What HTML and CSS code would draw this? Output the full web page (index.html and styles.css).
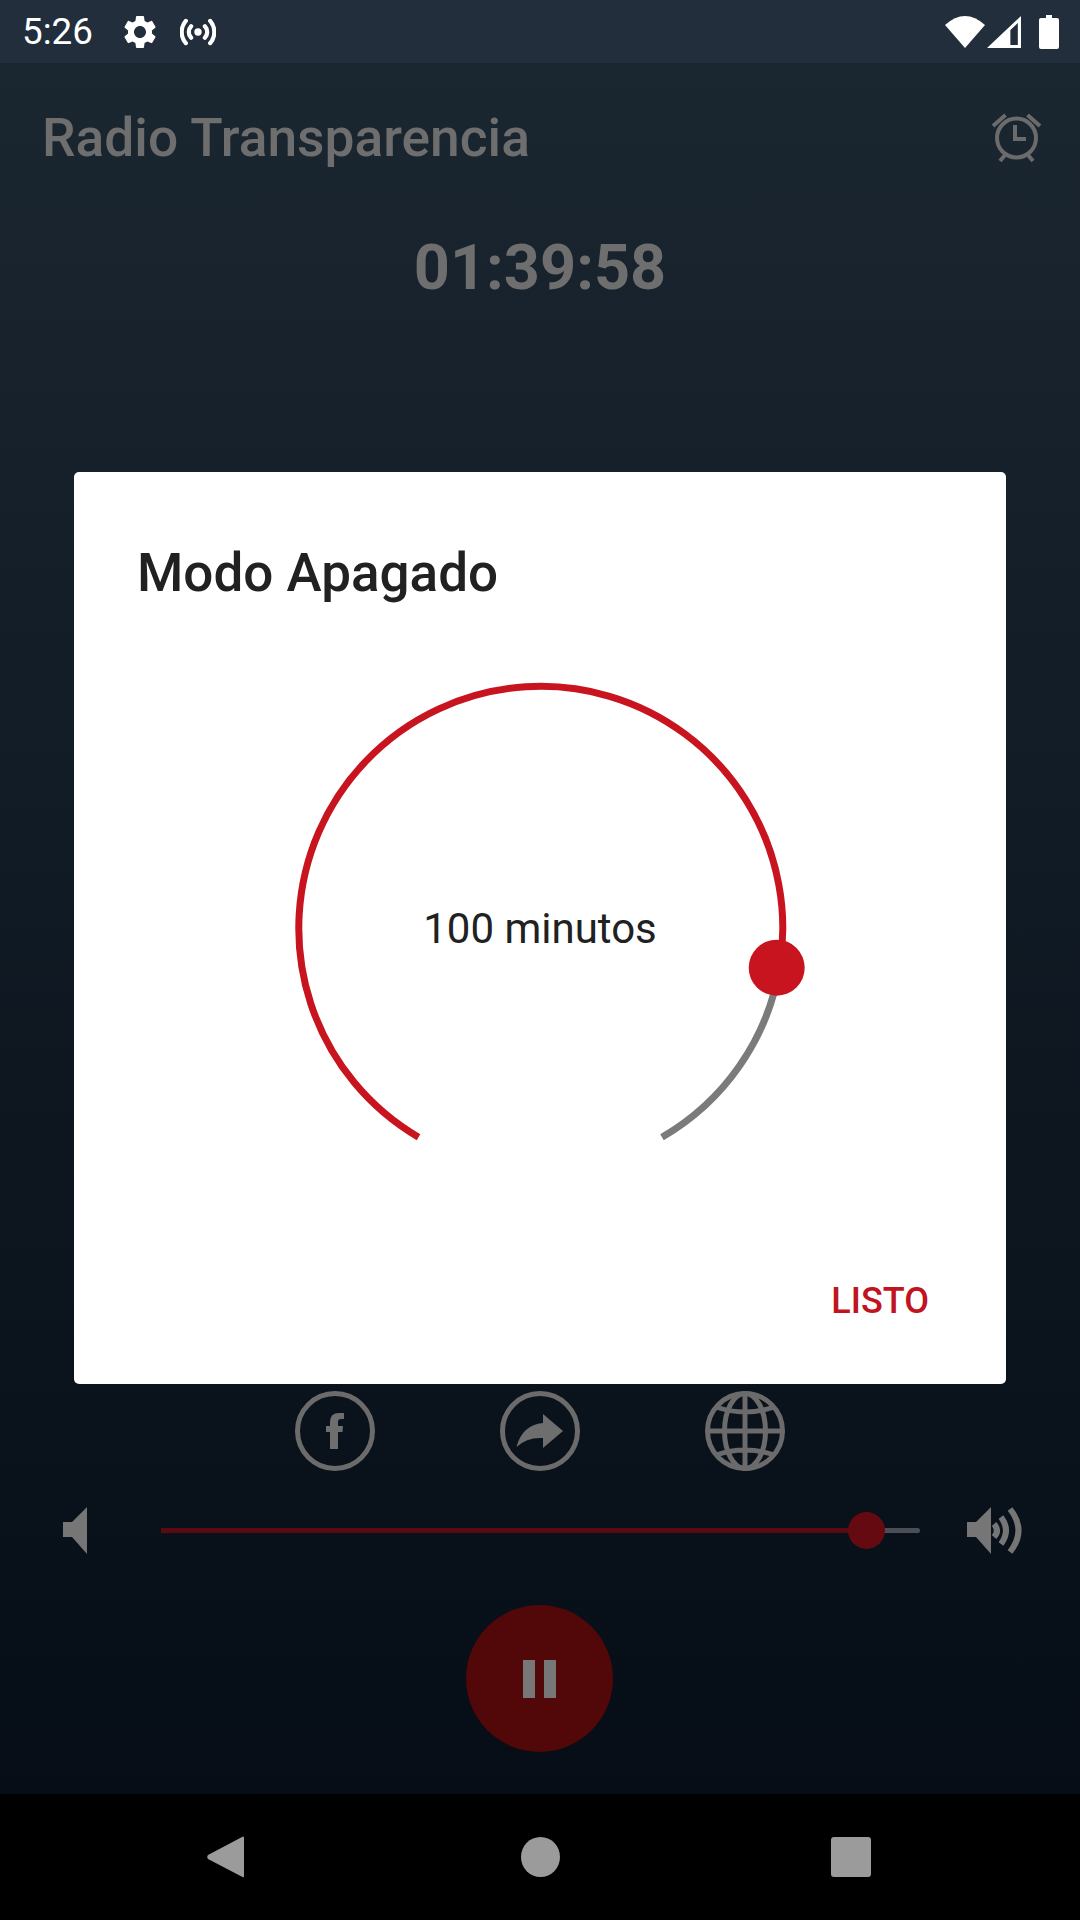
FILE: index.html
```html
<!DOCTYPE html>
<html lang="en">

<head>
    <meta charset="UTF-8">
    <meta name="viewport" content="width=device-width, initial-scale=1.0">
    <title>Radio Transparencia</title>
    <link rel="stylesheet" href="styles.css">
</head>

<body>
    <div class="screen">
        <!-- Status Bar -->
        <div class="status-bar">
            <span class="clock">5:26</span>
            <svg class="gear" viewBox="0 0 24 24"><path d="M19.14 12.94c.04-.3.06-.61.06-.94 0-.32-.02-.64-.07-.94l2.03-1.58c.18-.14.23-.41.12-.61l-1.92-3.32c-.12-.22-.37-.29-.59-.22l-2.39.96c-.5-.38-1.03-.7-1.62-.94l-.36-2.54c-.04-.24-.24-.41-.48-.41h-3.84c-.24 0-.43.17-.47.41l-.36 2.54c-.59.24-1.13.57-1.62.94l-2.39-.96c-.22-.08-.47 0-.59.22L2.74 8.87c-.12.21-.08.47.12.61l2.03 1.58c-.05.3-.09.63-.09.94s.02.64.07.94l-2.03 1.58c-.18.14-.23.41-.12.61l1.92 3.32c.12.22.37.29.59.22l2.39-.96c.5.38 1.03.7 1.62.94l.36 2.54c.05.24.24.41.48.41h3.84c.24 0 .44-.17.47-.41l.36-2.54c.59-.24 1.13-.56 1.62-.94l2.39.96c.22.08.47 0 .59-.22l1.92-3.32c.12-.22.07-.47-.12-.61l-2.01-1.58zM12 15.6c-1.98 0-3.6-1.62-3.6-3.6s1.62-3.6 3.6-3.6 3.6 1.62 3.6 3.6-1.62 3.6-3.6 3.6z"/></svg>
            <svg class="hotspot" viewBox="0 0 34 26">
                <circle cx="17" cy="13" r="3.5" class="solid"/>
                <path d="M10.5 7.5a8 8 0 0 0 0 11M23.5 7.5a8 8 0 0 1 0 11M5.5 2.5a16 16 0 0 0 0 21M28.5 2.5a16 16 0 0 1 0 21" class="line"/>
            </svg>
            <div class="status-right">
                <svg class="wifi" viewBox="0 0 38 33" preserveAspectRatio="none"><path d="M0 10Q19-8 38 10L19 33Z"/></svg>
                <svg class="signal" viewBox="0 0 32 32" preserveAspectRatio="none"><path fill-rule="evenodd" d="M32 0V32H0ZM29 7L22 14V29H29Z"/></svg>
                <svg class="battery" viewBox="0 0 20 34"><path d="M7 0H13V3H18Q20 3 20 5V32Q20 34 18 34H2Q0 34 0 32V5Q0 3 2 3H7Z"/></svg>
            </div>
        </div>

        <!-- Header -->
        <div class="header">
            <h1 class="station">Radio Transparencia</h1>
            <svg class="alarm" viewBox="0 0 50 50">
                <circle cx="24.5" cy="25" r="19.5"/>
                <path d="M23 12V26H34M1 13L13.5 2M48 13L35.500 2M8 48L13 42M41 48L36 42"/>
            </svg>
        </div>
        <div class="timer">01:39:58</div>

        <!-- Player Controls -->
        <div class="player">
            <div class="social">
                <svg class="social-icon" viewBox="0 0 80 80">
                    <circle cx="40" cy="40" r="37.500"/>
                    <path class="fill" d="M35 58V41H31V35H35V31Q35 22 44 22H49V28H46Q43 28 43 31V35H48L47.500 41H43V58Z"/>
                </svg>
                <svg class="social-icon" viewBox="0 0 80 80">
                    <circle cx="40" cy="40" r="37.500"/>
                    <path class="fill" d="M43 23L63 40L43 57V47Q27 46 16.500 56Q22 34 43 32Z"/>
                </svg>
                <svg class="social-icon" viewBox="0 0 80 80">
                    <circle cx="40" cy="40" r="37.500"/>
                    <ellipse cx="40" cy="40" rx="20.500" ry="37.500"/>
                    <path d="M40 2V78M2 40H78M11 16Q40 26 69 16M11 64Q40 54 69 64"/>
                </svg>
            </div>
            <div class="volume">
                <svg class="speaker-low" viewBox="0 0 24 47"><path d="M0 15H9L24 0V47L9 30H0Z"/></svg>
                <div class="slider">
                    <div class="slider-fill"></div>
                    <div class="slider-thumb"></div>
                </div>
                <svg class="speaker-high" viewBox="0 0 56 47">
                    <path class="fill" d="M0 15H9L24 0V47L9 30H0Z"/>
                    <path d="M27 17Q33 23.500 27 30M34 10Q44 23.500 34 37M43 2Q60 23.500 43 45"/>
                </svg>
            </div>
            <button class="play-btn"><span class="pause-bar"></span><span class="pause-bar"></span></button>
        </div>

        <!-- Navigation Bar -->
        <div class="nav-bar">
            <svg class="nav-back" viewBox="0 0 37 42"><path d="M36 .5Q37 0 37 2V40Q37 42 35.500 41L1 23Q-.5 21 1 19Z"/></svg>
            <div class="nav-home"></div>
            <div class="nav-recent"></div>
        </div>

        <!-- Sleep Timer Dialog -->
        <div class="dialog">
            <h2 class="dialog-title">Modo Apagado</h2>
            <div class="dial">
                <svg class="dial-ring" viewBox="0 0 540 540">
                    <path class="ring-rest" d="M509.400 312.700A242 242 0 0 1 392 481.200"/>
                    <path class="ring-done" d="M148.500 481.200A242 242 0 1 1 509.400 312.700"/>
                    <circle class="ring-thumb" cx="506.700" cy="311.700" r="28"/>
                </svg>
                <span class="dial-label">100 minutos</span>
            </div>
            <div class="dialog-actions">
                <button class="dialog-btn">LISTO</button>
            </div>
        </div>
    </div>
</body>

</html>
```

FILE: styles.css
```css
/* General Reset */
* {
    margin: 0;
    padding: 0;
    box-sizing: border-box;
    font-family: 'Roboto', sans-serif;
}

body {
    background: #000;
}

svg {
    display: block;
}

button {
    border: none;
    background: none;
}

/* Screen */
.screen {
    position: relative;
    width: 1080px;
    height: 1920px;
    display: flex;
    flex-direction: column;
    background: linear-gradient(180deg, #1b2731 0%, #040b14 100%);
    overflow: hidden;
}

/* Status Bar */
.status-bar {
    height: 63px;
    display: flex;
    align-items: center;
    padding: 0 21px 0 22px;
    background: #222e3b;
    color: #fff;
    fill: #fff;
}

.clock {
    font-size: 36.750px;
    width: 98px;
}

.gear {
    width: 40px;
    height: 40px;
}

.hotspot {
    width: 36px;
    height: 28px;
    margin-left: 20px;
}

.hotspot .line {
    fill: none;
    stroke: #fff;
    stroke-width: 4;
    stroke-linecap: round;
}

.status-right {
    display: flex;
    align-items: center;
    margin-left: auto;
}

.wifi {
    width: 40px;
    height: 33px;
}

.signal {
    width: 34px;
    height: 32px;
    margin-left: 2px;
}

.battery {
    width: 20px;
    height: 34px;
    margin-left: 18px;
}

/* Header */
.header {
    display: flex;
    align-items: center;
    justify-content: space-between;
    padding: 44px 38px 0 42px;
}

.station {
    font-size: 53.300px;
    font-weight: 500;
    color: #6e6e6e;
}

.alarm {
    width: 50px;
    height: 50px;
    fill: none;
    stroke: #6b6b6b;
    stroke-width: 4;
}

.timer {
    margin-top: 62px;
    text-align: center;
    font-size: 63px;
    font-weight: 700;
    color: #6e6e6e;
}

/* Player Controls */
.player {
    flex: 1;
    display: flex;
    flex-direction: column;
    justify-content: flex-end;
    align-items: center;
    padding-bottom: 42px;
}

.social {
    display: flex;
    gap: 125px;
}

.social-icon {
    width: 80px;
    height: 80px;
    fill: none;
    stroke: #6b6b6b;
    stroke-width: 5;
}

.social-icon .fill {
    fill: #6e6e6e;
    stroke: none;
}

.volume {
    width: 100%;
    display: flex;
    align-items: center;
    margin-top: 36px;
    padding: 0 57px 0 63px;
}

.speaker-low {
    width: 24px;
    height: 47px;
    fill: #767676;
}

.slider {
    position: relative;
    flex: 1;
    height: 5px;
    margin: 0 47px 0 74px;
    border-radius: 3px;
    background: #4b4e55;
}

.slider-fill {
    width: 92%;
    height: 100%;
    background: #5b0a12;
}

.slider-thumb {
    position: absolute;
    left: 687px;
    top: -16px;
    width: 37px;
    height: 37px;
    border-radius: 50%;
    background: #650a10;
}

.speaker-high {
    width: 56px;
    height: 47px;
    fill: none;
    stroke: #767676;
    stroke-width: 6;
}

.speaker-high .fill {
    fill: #767676;
    stroke: none;
}

.play-btn {
    width: 147px;
    height: 147px;
    margin: 51px 2px 0 0;
    border-radius: 50%;
    background: #520709;
    display: flex;
    align-items: center;
    justify-content: center;
    gap: 9px;
}

.pause-bar {
    width: 12px;
    height: 38px;
    background: #777;
}

/* Navigation Bar */
.nav-bar {
    height: 126px;
    background: #000;
    display: flex;
    align-items: center;
    padding-left: 207px;
}

.nav-back {
    width: 37px;
    height: 42px;
    fill: #9b9b9b;
}

.nav-home {
    width: 39px;
    height: 40px;
    margin-left: 277px;
    border-radius: 50%;
    background: #9b9b9b;
}

.nav-recent {
    width: 40px;
    height: 40px;
    margin-left: 271px;
    border-radius: 3px;
    background: #9b9b9b;
}

/* Dialog */
.dialog {
    position: absolute;
    left: 74px;
    top: 472px;
    width: 932px;
    height: 912px;
    background: #fff;
    border-radius: 5px;
    display: flex;
    flex-direction: column;
}

.dialog-title {
    padding: 70px 63px 0;
    font-size: 53px;
    font-weight: 500;
    line-height: 62px;
    color: #212121;
}

.dial {
    display: grid;
    place-items: center;
    margin-top: 52px;
}

.dial-ring,
.dial-label {
    grid-area: 1 / 1;
}

.dial-ring {
    width: 540px;
    height: 540px;
    fill: none;
    stroke-width: 7;
}

.ring-done {
    stroke: #c8141f;
}

.ring-rest {
    stroke: #7b7b7b;
}

.ring-thumb {
    fill: #c8141f;
}

.dial-label {
    font-size: 42px;
    color: #212121;
    padding-top: 4px;
}

.dialog-actions {
    display: flex;
    justify-content: flex-end;
    margin-top: auto;
    padding: 0 77px 62px 0;
}

.dialog-btn {
    font-size: 36px;
    font-weight: 500;
    color: #c0141f;
}
```
